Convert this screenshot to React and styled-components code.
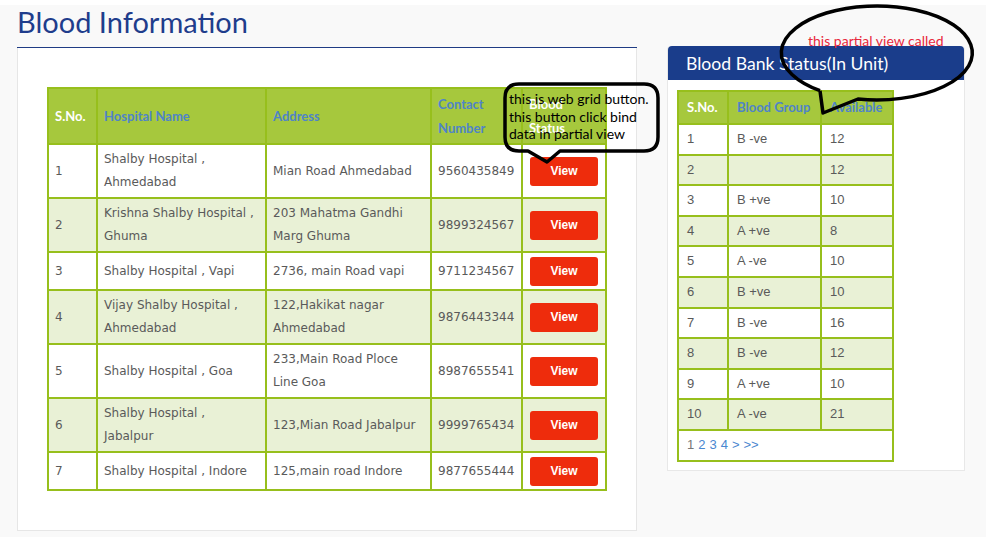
import styled, { createGlobalStyle } from 'styled-components';

const GlobalStyle = createGlobalStyle`
  html, body {
    margin: 0;
    padding: 0;
    background: #f9f9f9;
  }
  body {
    font-family: "DejaVu Sans", Verdana, sans-serif;
    color: #555;
  }
`

const TopStrip = styled.div`
  height: 5px;
  background: #fff;
`
const Main = styled.div`
  position: relative;
  display: flex;
  align-items: flex-start;
  gap: 30px;
  padding-left: 17px;
`
const LeftCol = styled.div`
  width: 620px;
`
const Title = styled.h2`
  margin: 0;
  padding-bottom: 8px;
  font-family: Lato, "Open Sans", sans-serif;
  font-weight: 400;
  font-size: 29px;
  line-height: 34px;
  color: #1f3d8c;
  border-bottom: 1px solid #1f3c84;
`
const Panel = styled.div`
  background: #fff;
  border: 1px solid #e6e6e6;
  border-top: none;
  padding: 39px 29px 39px 29px;
`
const Grid = styled.table`
  width: ${p => p.$width}px;
  table-layout: fixed;
  border-collapse: collapse;
  border: 2px solid #97bf1c;
`
const Th = styled.th`
  background: #a6c83d;
  border: 2px solid #97bf1c;
  padding: ${p => p.$pad || '3px 6px'};
  text-align: left;
  vertical-align: middle;
  font-family: Lato, "Open Sans", sans-serif;
  font-weight: 700;
  font-size: 13px;
  line-height: ${p => p.$lh || '24px'};
  color: ${p => (p.$light ? '#fff' : '#4f84c8')};
`
const Tr = styled.tr`
  background: ${p => (p.$alt ? '#e9f1d6' : '#fff')};
`
const Td = styled.td`
  border: 2px solid #97bf1c;
  padding: 3px ${p => p.$pr || 6}px 3px 6px;
  height: 30px;
  vertical-align: middle;
  font-size: 12px;
  line-height: 23px;
  color: #5a5a5a;
`
const ViewButton = styled.button`
  display: block;
  width: 68px;
  height: 29px;
  margin: 0 auto 0 1px;
  border: none;
  border-radius: 3px;
  background: #ee2c0c;
  color: #fff;
  font-family: "Liberation Sans", Arial, sans-serif;
  font-weight: 700;
  font-size: 12px;
  cursor: pointer;
`

const RightCol = styled.div`
  width: 296px;
  margin-top: 41px;
  background: #fff;
  border: 1px solid #e8e8e8;
  border-top: none;
  border-radius: 4px 4px 0 0;
`
const BoxHeader = styled.div`
  height: 34px;
  padding-left: 18px;
  display: flex;
  align-items: center;
  background: #1a3d8b;
  border-radius: 4px 4px 0 0;
  color: #fff;
  font-family: Lato, "Open Sans", sans-serif;
  font-size: 17.6px;
`
const BoxBody = styled.div`
  padding: 10px 9px 8px 9px;
`
const SmallTd = styled.td`
  border: 2px solid #97bf1c;
  padding: 6px 8px;
  font-family: "Liberation Sans", Arial, sans-serif;
  font-size: 13px;
  line-height: 16.6px;
  color: #5a5a5a;
`
const Pager = styled.div`
  display: flex;
  gap: 4px;
  font-family: "Liberation Sans", Arial, sans-serif;
  font-size: 13px;
`
const PageLink = styled.a`
  color: ${p => (p.$current ? '#777' : '#4a87d0')};
  text-decoration: none;
`

const Overlay = styled.svg`
  position: absolute;
  left: 0;
  top: 0;
  width: 986px;
  height: 537px;
  pointer-events: none;
`
const Note = styled.div`
  position: absolute;
  left: ${p => p.$x}px;
  top: ${p => p.$y}px;
  width: ${p => p.$w}px;
  font-family: Lato, "Open Sans", sans-serif;
  font-size: 14px;
  line-height: 17.5px;
  color: ${p => p.$color || '#000'};
  pointer-events: none;
`

const hospitals = [
  ['1', 'Shalby Hospital , Ahmedabad', 'Mian Road Ahmedabad', '9560435849'],
  ['2', 'Krishna Shalby Hospital , Ghuma', '203 Mahatma Gandhi Marg Ghuma', '9899324567'],
  ['3', 'Shalby Hospital , Vapi', '2736, main Road vapi', '9711234567'],
  ['4', 'Vijay Shalby Hospital , Ahmedabad', '122,Hakikat nagar Ahmedabad', '9876443344'],
  ['5', 'Shalby Hospital , Goa', '233,Main Road Ploce Line Goa', '8987655541'],
  ['6', 'Shalby Hospital , Jabalpur', '123,Mian Road Jabalpur', '9999765434'],
  ['7', 'Shalby Hospital , Indore', '125,main road Indore', '9877655444'],
];

const stock = [
  ['1', 'B -ve', '12'],
  ['2', '', '12'],
  ['3', 'B +ve', '10'],
  ['4', 'A +ve', '8'],
  ['5', 'A -ve', '10'],
  ['6', 'B +ve', '10'],
  ['7', 'B -ve', '16'],
  ['8', 'B -ve', '12'],
  ['9', 'A +ve', '10'],
  ['10', 'A -ve', '21'],
];

const App = () => (
  <>
    <GlobalStyle />
    <TopStrip />
    <Main>
      <LeftCol>
        <Title>Blood Information</Title>
        <Panel>
          <Grid $width={558}>
            <colgroup>
              <col style={{ width: 49 }} />
              <col style={{ width: 169 }} />
              <col style={{ width: 165 }} />
              <col style={{ width: 91 }} />
              <col style={{ width: 84 }} />
            </colgroup>
            <thead>
              <tr>
                <Th $light>S.No.</Th>
                <Th>Hospital Name</Th>
                <Th>Address</Th>
                <Th>Contact Number</Th>
                <Th $light>Blood Status</Th>
              </tr>
            </thead>
            <tbody>
              {hospitals.map((h, i) => (
                <Tr key={h[0]} $alt={i % 2 === 1}>
                  <Td>{h[0]}</Td>
                  <Td $pr={9}>{h[1]}</Td>
                  <Td>{h[2]}</Td>
                  <Td>{h[3]}</Td>
                  <Td><ViewButton>View</ViewButton></Td>
                </Tr>
              ))}
            </tbody>
          </Grid>
        </Panel>
      </LeftCol>

      <RightCol>
        <BoxHeader>Blood Bank Status(In Unit)</BoxHeader>
        <BoxBody>
          <Grid $width={215}>
            <colgroup>
              <col style={{ width: 50 }} />
              <col style={{ width: 93 }} />
              <col style={{ width: 72 }} />
            </colgroup>
            <thead>
              <tr>
                <Th $light $pad="7px 8px" $lh="17px">S.No.</Th>
                <Th $pad="7px 8px" $lh="17px">Blood Group</Th>
                <Th $pad="7px 8px" $lh="17px">Available</Th>
              </tr>
            </thead>
            <tbody>
              {stock.map((s, i) => (
                <Tr key={s[0]} $alt={i % 2 === 1}>
                  <SmallTd>{s[0]}</SmallTd>
                  <SmallTd>{s[1]}</SmallTd>
                  <SmallTd>{s[2]}</SmallTd>
                </Tr>
              ))}
              <Tr>
                <SmallTd colSpan={3}>
                  <Pager>
                    <PageLink $current>1</PageLink>
                    <PageLink href="#">2</PageLink>
                    <PageLink href="#">3</PageLink>
                    <PageLink href="#">4</PageLink>
                    <PageLink href="#">&gt;</PageLink>
                    <PageLink href="#">&gt;&gt;</PageLink>
                  </Pager>
                </SmallTd>
              </Tr>
            </tbody>
          </Grid>
        </BoxBody>
      </RightCol>
    </Main>

    {/* annotation callouts drawn over the screenshot */}
    <Overlay viewBox="0 0 986 537">
      <path
        d="M519 84 H644 Q658 84 658 98 V137 Q658 151 644 151 H560 L547 162 L528 151 H519 Q505 151 505 137 V98 Q505 84 519 84 Z"
        fill="none"
        stroke="#000"
        strokeWidth="3.5"
        strokeLinejoin="round"
      />
      <path
        d="M820 90.7 L823 113 L858 99 A95.5 47 0 1 0 820 90.7"
        fill="none"
        stroke="#000"
        strokeWidth="3.5"
        strokeLinejoin="round"
      />
    </Overlay>
    <Note $x={509} $y={90} $w={148}>
      this is web grid button. this button click bind data in partial view
    </Note>
    <Note $x={808} $y={32} $w={170} $color="#e8283c">
      this partial view called
    </Note>
  </>
);

export default App;
